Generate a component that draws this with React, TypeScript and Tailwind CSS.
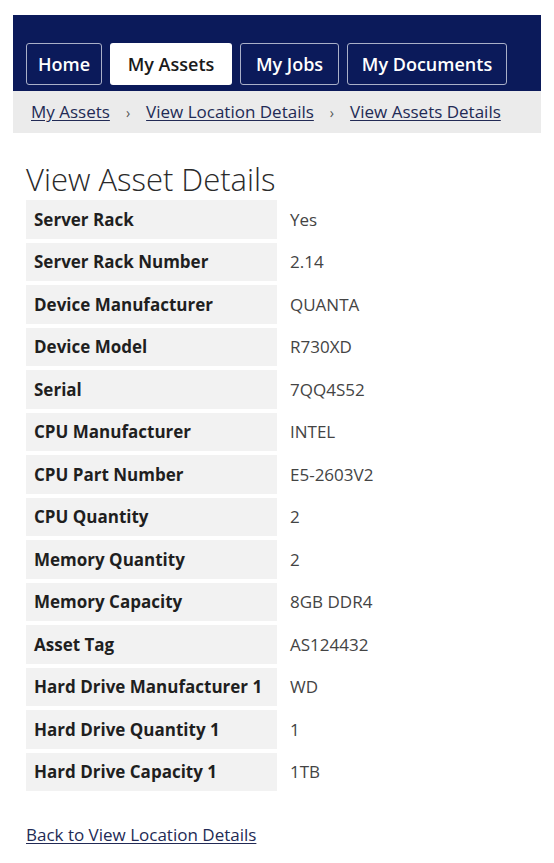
const rows: [string, string][] = [
  ["Server Rack", "Yes"],
  ["Server Rack Number", "2.14"],
  ["Device Manufacturer", "QUANTA"],
  ["Device Model", "R730XD"],
  ["Serial", "7QQ4S52"],
  ["CPU Manufacturer", "INTEL"],
  ["CPU Part Number", "E5-2603V2"],
  ["CPU Quantity", "2"],
  ["Memory Quantity", "2"],
  ["Memory Capacity", "8GB DDR4"],
  ["Asset Tag", "AS124432"],
  ["Hard Drive Manufacturer 1", "WD"],
  ["Hard Drive Quantity 1", "1"],
  ["Hard Drive Capacity 1", "1TB"],
];

const tabs: { label: string; width: string }[] = [
  { label: "Home", width: "w-[76px]" },
  { label: "My Assets", width: "w-[122px]" },
  { label: "My Jobs", width: "w-[99px]" },
  { label: "My Documents", width: "w-[160px]" },
];

export default function App() {
  return (
    <div
      className="min-h-[863px] bg-white pt-[15px]"
      style={{ fontFamily: '"Open Sans", "Noto Sans", sans-serif' }}
    >
      {/* Top nav */}
      <nav className="mx-[13px] h-[76px] bg-[#0b1a5a] flex items-end gap-2 px-[13px] pb-[6px]">
        {tabs.map((t) => {
          const active = t.label === "My Assets";
          return (
            <a
              key={t.label}
              href="#"
              className={
                active
                  ? `${t.width} h-[42px] flex items-center justify-center rounded-[3px] bg-white text-[#1a1a1a] text-[18px] font-semibold`
                  : `${t.width} h-[42px] flex items-center justify-center rounded-[3px] border border-[#aab0c8] text-white text-[18px] font-semibold`
              }
            >
              {t.label}
            </a>
          );
        })}
      </nav>

      {/* Breadcrumb */}
      <div className="mx-[13px] h-[42px] bg-[#ebebeb] flex items-center px-[18px] text-[17px] text-[#222a55]">
        <a href="#" className="underline underline-offset-2">My Assets</a>
        <span className="mx-[16px] text-[#555] text-[14px]">›</span>
        <a href="#" className="underline underline-offset-2">View Location Details</a>
        <span className="mx-[16px] text-[#555] text-[14px]">›</span>
        <a href="#" className="underline underline-offset-2">View Assets Details</a>
      </div>

      <div className="px-[26px]">
        <h1 className="mt-[28px] text-[31px] font-light text-[#2a2a2a] leading-[36px]">
          View Asset Details
        </h1>

        <div className="mt-[3px] flex flex-col gap-[4px]">
          {rows.map(([k, v]) => (
            <div key={k} className="flex h-[38.5px]">
              <div className="w-[251px] bg-[#f2f2f2] flex items-center px-[8px] text-[17px] font-bold text-[#1f1f1f]">
                {k}
              </div>
              <div className="flex items-center pl-[13px] text-[17px] text-[#444]">{v}</div>
            </div>
          ))}
        </div>

        <a
          href="#"
          className="mt-[31px] inline-block text-[17px] text-[#222a55] underline underline-offset-2"
        >
          Back to View Location Details
        </a>
      </div>
    </div>
  );
}
